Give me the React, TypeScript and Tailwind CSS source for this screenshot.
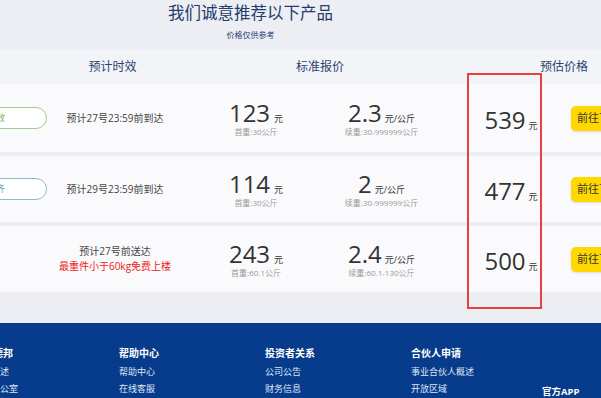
const rows = [
  {
    tag: "精准时效",
    tagClass: "border-[#a3cc86] text-[#7fb35a]",
    time: ["预计27号23:59前到达"],
    first: "123",
    firstSub: "首重:30公斤",
    per: "2.3",
    perSub: "续重:30-999999公斤",
    total: "539",
    h: "h-[68px]",
  },
  {
    tag: "准时送齐",
    tagClass: "border-[#8dbdca] text-[#5e9fb0]",
    time: ["预计29号23:59前到达"],
    first: "114",
    firstSub: "首重:30公斤",
    per: "2",
    perSub: "续重:30-999999公斤",
    total: "477",
    h: "h-[66px]",
  },
  {
    tag: "",
    tagClass: "",
    time: ["预计27号前送达", "最重件小于60kg免费上楼"],
    first: "243",
    firstSub: "首重:60.1公斤",
    per: "2.4",
    perSub: "续重:60.1-130公斤",
    total: "500",
    h: "h-[66px]",
  },
];

const footer = [
  { title: "走进德邦", items: ["德邦概述", "总裁办公室"], w: "w-[146px]" },
  { title: "帮助中心", items: ["帮助中心", "在线客服"], w: "w-[146px]" },
  { title: "投资者关系", items: ["公司公告", "财务信息"], w: "w-[146px]" },
  { title: "合伙人申请", items: ["事业合伙人概述", "开放区域"], w: "w-[131px]" },
];

const App = () => {
  return (
    <div className="relative w-[601px] h-[398px] overflow-hidden bg-[#eceef3] whitespace-nowrap font-['Open_Sans','Noto_Sans_CJK_SC',sans-serif]">
      {/* heading */}
      <div className="w-[501px] h-[50px] flex flex-col items-center pt-[2px]">
        <div className="text-[16.5px] leading-[22px] text-[#233c6c]">我们诚意推荐以下产品</div>
        <div className="mt-[6px] text-[8px] leading-[10px] text-[#2a4275]">价格仅供参考</div>
      </div>

      {/* header row */}
      <div className="h-[34px] bg-[#f3f4f7] flex items-center text-[12px] text-[#2c4372]">
        <div className="w-[60px] shrink-0" />
        <div className="w-[105px] shrink-0 text-center">预计时效</div>
        <div className="w-[60px] shrink-0" />
        <div className="w-[190px] shrink-0 text-center">标准报价</div>
        <div className="w-[125px] shrink-0" />
        <div className="shrink-0">预估价格</div>
      </div>

      {/* product rows */}
      <div className="flex flex-col gap-[4px]">
        {rows.map((r) => (
          <div key={r.total} className={`${r.h} bg-[#fafafc] flex items-center`}>
            <div className="w-[60px] shrink-0 flex">
              {r.tag && (
                <div
                  className={`-ml-[73px] w-[120px] h-[22px] shrink-0 rounded-full border bg-white flex items-center justify-center text-[9px] ${r.tagClass}`}
                >
                  {r.tag}
                </div>
              )}
            </div>
            <div className="w-[110px] shrink-0 flex flex-col items-center text-[10px] leading-[15px] text-[#444]">
              <div>{r.time[0]}</div>
              {r.time[1] && <div className="text-[#f01818]">{r.time[1]}</div>}
            </div>
            <div className="w-[30px] shrink-0" />
            <div className="w-[112px] shrink-0 flex flex-col items-center mt-[2px]">
              <div className="flex items-baseline text-[#333]">
                <span className="text-[24px] leading-[24px]">{r.first}</span>
                <span className="ml-[4px] text-[9px]">元</span>
              </div>
              <div className="mt-[1px] text-[8px] leading-[10px] text-[#999]">{r.firstSub}</div>
            </div>
            <div className="w-[139px] shrink-0 flex flex-col items-center mt-[2px]">
              <div className="flex items-baseline text-[#333]">
                <span className="text-[24px] leading-[24px]">{r.per}</span>
                <span className="ml-[3px] text-[9px]">元/公斤</span>
              </div>
              <div className="mt-[1px] text-[8px] leading-[10px] text-[#999]">{r.perSub}</div>
            </div>
            <div className="w-[120px] shrink-0 flex justify-center items-baseline text-[#333] mt-[4px]">
              <span className="text-[24px] leading-[24px]">{r.total}</span>
              <span className="ml-[3px] text-[9px]">元</span>
            </div>
            <div className="h-[25px] shrink-0 px-[6px] rounded-[5px] bg-[#ffd800] shadow-sm flex items-center text-[11px] text-[#333]">
              前往下单
            </div>
          </div>
        ))}
      </div>

      {/* footer */}
      <div className="absolute left-0 right-0 top-[323px] bottom-0 bg-[#073c8c] flex pt-[23px] text-white">
        <div className="flex -ml-[27px]">
          {footer.map((c) => (
            <div key={c.title} className={`${c.w} shrink-0 flex flex-col`}>
              <div className="text-[10px] leading-[14px] font-bold">{c.title}</div>
              <div className="mt-[5px] flex flex-col gap-[3px] text-[9px] leading-[14px] text-[#dfe6f3]">
                {c.items.map((i) => (
                  <div key={i}>{i}</div>
                ))}
              </div>
            </div>
          ))}
          <div className="shrink-0 pt-[39px] text-[9.5px] leading-[14px] font-bold">官方APP</div>
        </div>
      </div>

      {/* annotation box */}
      <div className="absolute left-[467px] top-[73px] w-[75px] h-[236px] border-2 border-[#e8403e]" />
    </div>
  );
};

export default App;
